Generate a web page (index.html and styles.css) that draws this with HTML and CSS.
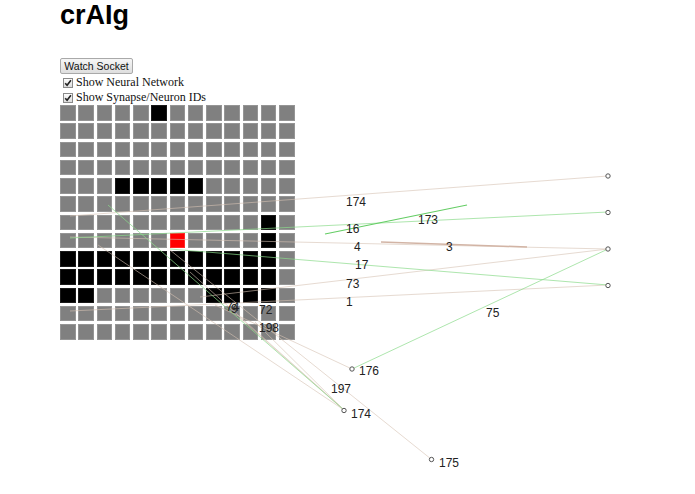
FILE: index.html
```html
<!DOCTYPE html>
<html>
<head>
<meta charset="utf-8">
<title>crAIg</title>
<link rel="stylesheet" href="styles.css">
</head>
<body>
<div class="page">
  <h1 class="title">crAIg</h1>
  <div class="controls">
    <button class="btn">Watch Socket</button>
    <label class="check"><span class="cb"><svg width="8" height="8" viewBox="0 0 8 8"><path d="M1.2 4.2 L3.1 6.3 L6.9 1.2" fill="none" stroke="#222" stroke-width="1.6"/></svg></span>Show Neural Network</label>
    <label class="check"><span class="cb"><svg width="8" height="8" viewBox="0 0 8 8"><path d="M1.2 4.2 L3.1 6.3 L6.9 1.2" fill="none" stroke="#222" stroke-width="1.6"/></svg></span>Show Synapse/Neuron IDs</label>
  </div>
  <div class="grid" id="grid"></div>
</div>
<svg class="net" width="695" height="494" viewBox="0 0 695 494">
  <g class="tan">
    <line x1="70" y1="216" x2="608" y2="176"/>
    <line x1="70" y1="237" x2="608" y2="249"/>
    <line x1="200" y1="297" x2="608" y2="249"/>
    <line x1="70" y1="311" x2="608" y2="285"/>
    <line x1="215" y1="305" x2="352" y2="369"/>
    <line x1="98" y1="245" x2="344" y2="410"/>
    <line x1="190" y1="272" x2="344" y2="410"/>
    <line x1="240" y1="318" x2="344" y2="410"/>
    <line x1="255" y1="322" x2="344" y2="410"/>
    <line x1="170" y1="250" x2="431" y2="459"/>
  </g>
  <g class="grn">
    <line x1="70" y1="238" x2="608" y2="212"/>
    <line x1="170" y1="249" x2="608" y2="285"/>
    <line x1="352" y1="369" x2="608" y2="249"/>
    <line x1="108" y1="205" x2="344" y2="410"/>
  </g>
  <line class="bright" x1="325" y1="234" x2="467" y2="205"/>
  <line class="brown" x1="381" y1="242" x2="527" y2="247"/>
  <g class="nodes">
    <circle cx="608" cy="176" r="2.2"/>
    <circle cx="608" cy="212.5" r="2.2"/>
    <circle cx="608" cy="249" r="2.2"/>
    <circle cx="608" cy="285.5" r="2.2"/>
    <circle cx="352" cy="369" r="2.2"/>
    <circle cx="344" cy="410.5" r="2.2"/>
    <circle cx="431.5" cy="459.5" r="2.2"/>
  </g>
  <g class="ids">
    <text x="346" y="206">174</text>
    <text x="346" y="233">16</text>
    <text x="418" y="224">173</text>
    <text x="354" y="251">4</text>
    <text x="446" y="251">3</text>
    <text x="355" y="269">17</text>
    <text x="346" y="288">73</text>
    <text x="346" y="306">1</text>
    <text x="486" y="317">75</text>
    <text x="226" y="311">74</text>
    <text x="231" y="313">9</text>
    <text x="259" y="314">72</text>
    <text x="259" y="332">198</text>
    <text x="359" y="375">176</text>
    <text x="331" y="393">197</text>
    <text x="351" y="418">174</text>
    <text x="439" y="467">175</text>
  </g>
</svg>
<script src="app.js"></script>
</body>
</html>
```
FILE: app.js
```js
(function () {
  var black = {
    0: [5],
    4: [3, 4, 5, 6, 7],
    6: [11],
    7: [11],
    8: [0,1,2,3,4,5,6,7,8,9,10,11],
    9: [0,1,2,3,4,5,6,7,8,9,10,11],
    10: [0, 1, 8, 9, 10, 11]
  };
  var grid = document.getElementById('grid');
  for (var r = 0; r < 13; r++) {
    for (var c = 0; c < 13; c++) {
      var d = document.createElement('div');
      d.className = 'cell';
      if (black[r] && black[r].indexOf(c) >= 0) d.className += ' on';
      if (r === 7 && c === 6) d.className += ' hot';
      grid.appendChild(d);
    }
  }
})();
```
FILE: styles.css
```css
html, body {
  margin: 0;
  padding: 0;
  background: #fff;
}
body {
  width: 695px;
  height: 494px;
  overflow: hidden;
  position: relative;
  font-family: "Liberation Serif", "Times New Roman", serif;
}
.page {
  padding-left: 60px;
}
.title {
  margin: 0;
  padding-top: 1px;
  height: 57px;
  font-family: "Liberation Sans", Arial, sans-serif;
  font-size: 27px;
  font-weight: bold;
  line-height: 28px;
  color: #000;
}
.controls {
  display: flex;
  flex-direction: column;
  align-items: flex-start;
}
.btn {
  font-family: "Liberation Sans", Arial, sans-serif;
  font-size: 10.5px;
  height: 16px;
  width: 73px;
  padding: 0;
  margin: 0 0 1px 0;
  border: 1px solid #a9a9a9;
  border-radius: 2px;
  background: linear-gradient(#f6f6f6, #dedede);
  color: #111;
  line-height: 14px;
}
.check {
  display: flex;
  align-items: center;
  height: 15px;
  font-size: 12px;
  color: #111;
  padding-left: 3px;
}
.cb {
  width: 8px;
  height: 8px;
  border: 1px solid #8a8a8a;
  background: linear-gradient(#fdfdfd, #dcdcdc);
  margin-right: 3px;
  display: flex;
}
.cb svg {
  display: block;
}
.grid {
  margin-top: 0;
  display: grid;
  grid-template-columns: repeat(13, 15.5px);
  grid-auto-rows: 15.5px;
  gap: 2.75px;
}
.cell {
  box-sizing: border-box;
  background: #808080;
  border: 1px solid #959595;
}
.cell.on {
  background: #000;
  border-color: #1a1a1a;
}
.cell.hot {
  background: #ff0000;
  border-color: #ff2a2a;
}
.net {
  position: absolute;
  left: 0;
  top: 0;
  pointer-events: none;
}
.tan line {
  stroke: rgb(215, 195, 180);
  stroke-width: 1;
  opacity: 0.6;
}
.grn line {
  stroke: rgb(140, 220, 140);
  stroke-width: 1;
  opacity: 0.7;
}
.bright {
  stroke: rgb(100, 205, 100);
  stroke-width: 1.2;
}
.brown {
  stroke: rgb(210, 180, 165);
  stroke-width: 1.5;
}
.nodes circle {
  fill: #fff;
  stroke: #555;
  stroke-width: 1;
}
.ids text {
  font-family: "Liberation Sans", Arial, sans-serif;
  font-size: 12px;
  fill: #222;
}
```
